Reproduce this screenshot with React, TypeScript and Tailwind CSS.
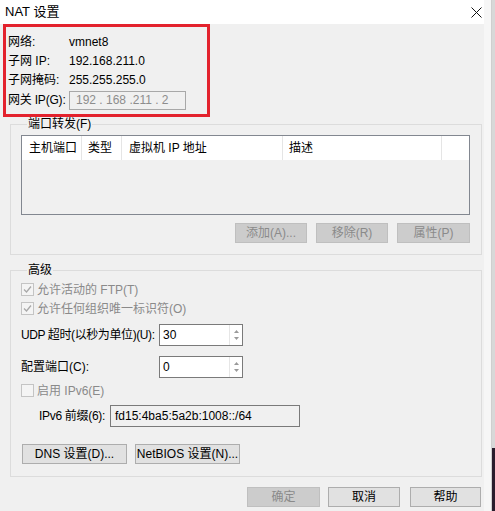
import React from "react"

function Check({ checked, label }: { checked?: boolean; label: string }) {
    return (
        <div className="flex h-[19px] items-center">
            <span className="flex h-[13px] w-[13px] items-center justify-center border border-[#c4c4c4] bg-[#f4f4f4]">
                {checked && (
                    <svg width="9" height="9" viewBox="0 0 9 9">
                        <path d="M1 4.5 L3.5 7 L8 1.5" fill="none" stroke="#a8a8a8" strokeWidth="1.3" />
                    </svg>
                )}
            </span>
            <span className="ml-[3px] text-[#8a8a8a]">{label}</span>
        </div>
    )
}

function Spin({ value }: { value: string }) {
    return (
        <div className="flex h-[22px] w-[84px] shrink-0 border border-[#7a7a7a] bg-white">
            <span className="flex-1 pl-[3px] leading-[20px]">{value}</span>
            <div className="flex w-[13px] flex-col items-center justify-center gap-[4px] border-l border-[#e6e6e6]">
                <svg width="5" height="3" viewBox="0 0 5 3"><path d="M0 3 L2.5 0 L5 3Z" fill="#9a9a9a" /></svg>
                <svg width="5" height="3" viewBox="0 0 5 3"><path d="M0 0 L2.5 3 L5 0Z" fill="#9a9a9a" /></svg>
            </div>
        </div>
    )
}

function Btn({ label, w, disabled }: { label: string; w: string; disabled?: boolean }) {
    return (
        <div
            className={
                (disabled
                    ? "border-[#bfbfbf] bg-[#cccccc] text-[#8a8a8a] "
                    : "border-[#adadad] bg-[#e1e1e1] text-black ") +
                "flex h-[20px] shrink-0 items-center justify-center border " +
                w
            }
        >
            {label}
        </div>
    )
}

export default function App() {
    return (
        <div className="flex h-[511px] w-[495px] overflow-hidden whitespace-nowrap bg-white font-['Liberation_Sans','Noto_Sans_CJK_SC',sans-serif] text-[12px] leading-[14px] text-black">
            {/* dialog */}
            <div className="flex w-[484px] shrink-0 flex-col bg-[#f0f0f0]">
                <div className="flex h-[24px] items-center justify-between bg-white pl-[5px] pr-[2px]">
                    <span className="text-[13px]">NAT 设置</span>
                    <svg width="11" height="11" viewBox="0 0 11 11">
                        <path d="M0.5 0.5 L10.5 10.5 M10.5 0.5 L0.5 10.5" stroke="#111" strokeWidth="1" />
                    </svg>
                </div>

                {/* highlighted summary */}
                <div className="ml-[3px] h-[93px] w-[207px] border-[3px] border-[#e3222d] pl-[2px] pt-[5px]">
                    <div className="grid grid-cols-[61px_1fr] grid-rows-[19px_19px_19px_22px] items-center">
                        <span>网络:</span>
                        <span>vmnet8</span>
                        <span>子网 IP:</span>
                        <span>192.168.211.0</span>
                        <span>子网掩码:</span>
                        <span>255.255.255.0</span>
                        <span className="tracking-[-0.2px]">网关 IP(G):</span>
                        <div className="flex h-[19px] w-[117px] items-center border border-[#a8a8a8] pl-[6px] text-[#8d8d8d]">
                            192 . 168 .211 . 2
                        </div>
                    </div>
                </div>

                {/* port forwarding */}
                <fieldset className="ml-[10px] w-[472px] border border-[#dcdcdc] px-[10px] pb-[11px]">
                    <legend className="ml-[6px] px-[1px]">端口转发(F)</legend>
                    <div className="mt-[4px] flex h-[80px] w-[449px] flex-col border border-[#828790] bg-[#f0f0f0]">
                        <div className="flex h-[24px] items-center bg-white">
                            <span className="flex h-full w-[60px] items-center border-r border-[#e5e5e5] pl-[7px]">主机端口</span>
                            <span className="flex h-full w-[40px] items-center border-r border-[#e5e5e5] pl-[6px]">类型</span>
                            <span className="flex h-full w-[161px] items-center border-r border-[#e5e5e5] pl-[7px]">虚拟机 IP 地址</span>
                            <span className="flex h-full w-[159px] items-center border-r border-[#e5e5e5] pl-[6px]">描述</span>
                            <span className="flex-1" />
                        </div>
                    </div>
                    <div className="mt-[8px] flex w-[449px] justify-end gap-[9px]">
                        <Btn label="添加(A)..." w="w-[72px]" disabled />
                        <Btn label="移除(R)" w="w-[72px]" disabled />
                        <Btn label="属性(P)" w="w-[73px]" disabled />
                    </div>
                </fieldset>

                {/* advanced */}
                <fieldset className="ml-[10px] mt-[8px] w-[472px] border border-[#dcdcdc] px-[10px] pb-[12px]">
                    <legend className="ml-[6px] px-[1px]">高级</legend>
                    <div className="mt-[3px] flex flex-col">
                        <Check checked label="允许活动的 FTP(T)" />
                        <Check checked label="允许任何组织唯一标识符(O)" />
                        <div className="mt-[6px] flex items-center">
                            <span className="w-[138px] shrink-0 tracking-[-0.4px]">UDP 超时(以秒为单位)(U):</span>
                            <Spin value="30" />
                        </div>
                        <div className="mt-[10px] flex items-center">
                            <span className="w-[138px] shrink-0">配置端口(C):</span>
                            <Spin value="0" />
                        </div>
                        <div className="mt-[3px]">
                            <Check label="启用 IPv6(E)" />
                        </div>
                        <div className="mt-[5px] flex items-center">
                            <span className="w-[89px] shrink-0 pl-[18px] tracking-[-0.3px]">IPv6 前缀(6):</span>
                            <div className="flex h-[22px] w-[190px] shrink-0 items-center border border-[#7a7a7a] bg-[#f0f0f0] pl-[4px]">
                                fd15:4ba5:5a2b:1008::/64
                            </div>
                        </div>
                        <div className="mt-[17px] flex gap-[8px] pl-[1px]">
                            <Btn label="DNS 设置(D)..." w="w-[105px]" />
                            <Btn label="NetBIOS 设置(N)..." w="w-[105px]" />
                        </div>
                    </div>
                </fieldset>

                <div className="mt-auto flex justify-end pb-[4px] pr-[3px]">
                    <Btn label="确定" w="w-[73px]" disabled />
                    <div className="ml-[8px]">
                        <Btn label="取消" w="w-[72px]" />
                    </div>
                    <div className="ml-[10px]">
                        <Btn label="帮助" w="w-[71px]" />
                    </div>
                </div>
            </div>

            {/* window frame edge and desktop behind */}
            <div className="w-[8px] shrink-0 border-r border-[#cfcfcf] bg-[#f6f6f6]" />
            <div className="flex flex-1 flex-col">
                <div className="flex-1 bg-[#d8d8d8]" />
                <div className="h-[63px] bg-[#2a1c2c]" />
            </div>
        </div>
    )
}
